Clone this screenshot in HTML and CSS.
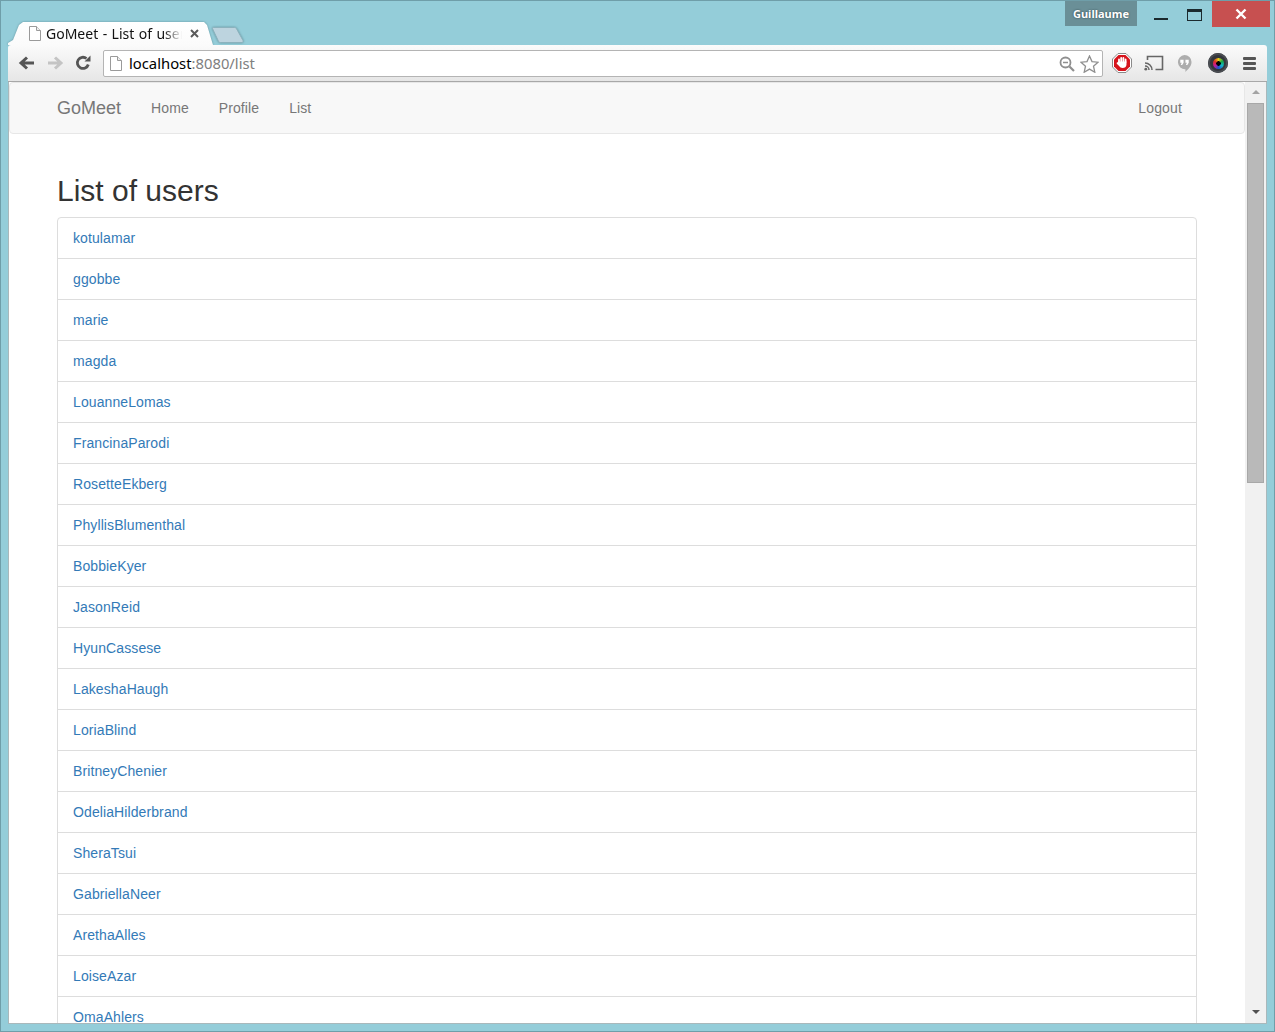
FILE: index.html
```html
<!DOCTYPE html>
<html lang="en">
<head>
<meta charset="utf-8">
<title>GoMeet - List of users</title>
<link rel="stylesheet" href="styles.css">
</head>
<body>
<div class="window">
  <div class="titlebar">
    <div class="tabstrip">
      <div class="tab">
        <svg class="favicon" width="12" height="15" viewBox="0 0 12 15"><path d="M.5.5h7l4 4v10H.5z" fill="#fff" stroke="#9a9a9a"/><path d="M7.5.5v4h4" fill="#eee" stroke="#9a9a9a"/></svg>
        <span class="tab-title">GoMeet - List of user</span>
        <svg class="tab-close" width="9" height="9" viewBox="0 0 9 9"><path d="M1 1l7 7M8 1L1 8" stroke="#5a5a5a" stroke-width="2"/></svg>
      </div>
      <svg class="newtab" width="32" height="16" viewBox="0 0 32 16"><path d="M1.500.5h21a2 2 0 0 1 2 1.200l6.500 11.800c.3 1-.2 2-1 2H8.500a2 2 0 0 1-2-1.200L.6 1.800C.3 1 .7.500 1.500.500z" fill="#bdd4df" stroke="#8cb2bd"/></svg>
    </div>
    <div class="wincontrols">
      <div class="profile">Guillaume</div>
      <div class="winbtn"><span class="win-min"></span></div>
      <div class="winbtn"><span class="win-max"></span></div>
      <div class="winclose"><svg width="12" height="12" viewBox="0 0 12 12"><path d="M1.500 1.500l9 9M10.500 1.500l-9 9" stroke="#fff" stroke-width="2.400"/></svg></div>
    </div>
  </div>
  <div class="toolbar">
    <svg class="tb-icon tb-back" width="18" height="16" viewBox="0 0 18 16"><path d="M16 8H4M9 2.500L3 8l6 5.500" fill="none" stroke="#555" stroke-width="3"/></svg>
    <svg class="tb-icon" width="18" height="16" viewBox="0 0 18 16"><path d="M2 8h12M9 2.500L15 8l-6 5.500" fill="none" stroke="#c4c4c4" stroke-width="3"/></svg>
    <svg class="tb-icon tb-reload" width="16" height="16" viewBox="0 0 16 16"><path d="M13.300 9.500A5.600 5.600 0 1 1 11.500 3.500" fill="none" stroke="#555" stroke-width="2.800"/><path d="M9.500 6.500H15.500V.5z" fill="#555"/></svg>
    <div class="omnibox">
      <svg class="favicon" width="12" height="15" viewBox="0 0 12 15"><path d="M.5.5h7l4 4v10H.5z" fill="#fff" stroke="#9a9a9a"/><path d="M7.500.5v4h4" fill="#eee" stroke="#9a9a9a"/></svg>
      <span class="url"><span class="url-host">localhost</span>:8080/list</span>
      <svg class="omni-zoom" width="16" height="16" viewBox="0 0 16 16"><circle cx="6.500" cy="6.500" r="5" fill="none" stroke="#8f8f8f" stroke-width="1.800"/><path d="M4 6.500h5" stroke="#8f8f8f" stroke-width="1.500"/><path d="M10.500 10.500L15 15" stroke="#8f8f8f" stroke-width="2.200"/></svg>
      <svg class="omni-star" width="19" height="18" viewBox="0 0 19 18"><path d="M9.500 1l2.500 5.600 6 .6-4.500 4 1.300 6-5.300-3.100-5.300 3.100 1.300-6L1 7.200l6-.6z" fill="#fff" stroke="#8f8f8f" stroke-width="1.300"/></svg>
    </div>
    <div class="extensions">
      <svg width="20" height="20" viewBox="0 0 20 20"><path d="M6 .5h8L19.500 6v8L14 19.500H6L.5 14V6z" fill="#fff" stroke="#8a8a8a"/><path d="M6.500 2h7L18 6.500v7L13.500 18h-7L2 13.500v-7z" fill="#d6141c"/><path d="M7 9V6.500M9.200 9V5M11.400 9V5M13.600 9V6.500" stroke="#fff" stroke-width="1.800" stroke-linecap="round"/><path d="M6.100 8.500h8.400v3c0 2.400-1.800 3.500-3.900 3.500-1.600 0-2.700-.7-3.500-2L4.800 10.700c-.5-.9.500-1.700 1.300-1.200z" fill="#fff"/></svg>
      <svg width="20" height="16" viewBox="0 0 20 16"><path d="M3.500 5V1.500h15v13h-7" fill="none" stroke="#666" stroke-width="1.600"/><path d="M1 8a7 7 0 0 1 7 7M1 11a4 4 0 0 1 4 4" fill="none" stroke="#666" stroke-width="1.500"/><circle cx="1.800" cy="14.200" r="1.400" fill="#666"/></svg>
      <svg class="ext-hangouts" width="15" height="19" viewBox="0 0 16 19"><path d="M8 .5a7.500 7.500 0 0 1 7.500 7.500c0 4.500-3.500 7.800-6.500 10.500v-3A7.500 7.500 0 0 1 8 .5z" fill="#adadad"/><path d="M3.500 5.500h3.500v3.200L5.500 11H4l1-2.300H3.500zM9 5.500h3.500v3.200L11 11H9.500l1-2.300H9z" fill="#fff"/></svg>
      <div class="lens"><span class="lens-color"></span></div>
      <div class="menu-icon"><span></span><span></span><span></span></div>
    </div>
  </div>
  <div class="viewport">
    <div class="page">
      <nav class="navbar">
        <a class="brand">GoMeet</a>
        <a class="nav-link">Home</a>
        <a class="nav-link">Profile</a>
        <a class="nav-link">List</a>
        <a class="nav-link nav-right">Logout</a>
      </nav>
      <main class="container">
        <h2 class="heading">List of users</h2>
        <div class="list-group">
          <a class="list-item">kotulamar</a>
          <a class="list-item">ggobbe</a>
          <a class="list-item">marie</a>
          <a class="list-item">magda</a>
          <a class="list-item">LouanneLomas</a>
          <a class="list-item">FrancinaParodi</a>
          <a class="list-item">RosetteEkberg</a>
          <a class="list-item">PhyllisBlumenthal</a>
          <a class="list-item">BobbieKyer</a>
          <a class="list-item">JasonReid</a>
          <a class="list-item">HyunCassese</a>
          <a class="list-item">LakeshaHaugh</a>
          <a class="list-item">LoriaBlind</a>
          <a class="list-item">BritneyChenier</a>
          <a class="list-item">OdeliaHilderbrand</a>
          <a class="list-item">SheraTsui</a>
          <a class="list-item">GabriellaNeer</a>
          <a class="list-item">ArethaAlles</a>
          <a class="list-item">LoiseAzar</a>
          <a class="list-item">OmaAhlers</a>
        </div>
      </main>
    </div>
    <div class="scrollbar">
      <span class="arrow-up"></span>
      <div class="track"><div class="thumb"></div></div>
      <span class="arrow-down"></span>
    </div>
  </div>
</div>
</body>
</html>
```
FILE: styles.css
```css
* { box-sizing: border-box; }
html, body { margin: 0; height: 100%; overflow: hidden; }
body { font-family: "Liberation Sans", Arial, sans-serif; background: #94cdd9; }
.window {
  width: 1275px; height: 1032px; display: flex; flex-direction: column;
  background: #94cdd9; border: 1px solid #6f9ea9; padding: 0 7px 7px;
}
.titlebar { height: 44px; flex: none; display: flex; justify-content: space-between; align-items: flex-start; }
.tabstrip { display: flex; align-items: flex-end; height: 44px; filter: drop-shadow(0 0 1px rgba(60, 100, 110, .55)); }
.tab {
  width: 205px; height: 23px; background: linear-gradient(#fff, #fbfbfb);
  display: flex; align-items: center; padding: 0 0 1px 21px; gap: 5px; margin-right: -1px;
  clip-path: polygon(0 100%, 0 21px, 5px 18px, 11px 3px, 15px 0, 196px 0, 199px 3px, 205px 100%);
}
.favicon { flex: none; }
.tab-title {
  font-family: "Noto Sans", sans-serif; font-size: 14px; word-spacing: .8px; color: #111; width: 136px; white-space: nowrap;
  overflow: hidden; -webkit-mask-image: linear-gradient(90deg, #000 118px, transparent 136px); mask-image: linear-gradient(90deg, #000 118px, transparent 136px);
}
.tab-close { flex: none; margin-left: 3px; }
.newtab { margin-bottom: 2px; }
.wincontrols { display: flex; align-items: flex-start; margin-right: -3px; }
.profile {
  width: 72px; height: 25px; margin-right: 6px; background: #6a8f97; color: #fff;
  font: bold 11px/26px "Noto Sans", sans-serif; text-align: center; text-shadow: 0 0 2px #2c3f44;
}
.winbtn { width: 34px; height: 25px; display: flex; align-items: center; justify-content: center; }
.win-min { width: 14px; height: 2px; background: #1b2a2e; margin: 11px 0 0 1px; }
.win-max { width: 15px; height: 12px; border: 1px solid #1b2a2e; border-top-width: 3px; margin-top: 2px; }
.winclose { width: 58px; height: 26px; background: #c75050; display: flex; align-items: center; justify-content: center; margin-left: 1px; }
.toolbar {
  position: relative;
  height: 37px; flex: none; display: flex; align-items: center; padding: 0 9px 0 10px;
  background: linear-gradient(#fbfbfb, #e6e6e6); border-bottom: 1px solid #a8a8a8; border-radius: 3px 3px 0 0;
}
.tb-icon { flex: none; margin-right: 11px; }
.tb-back { margin-right: 10px; }
.tb-reload { margin-right: 11px; }
.omnibox {
  width: 1000px; height: 27px; flex: none; margin-left: 1px; margin-top: 1px; background: #fff; border: 1px solid #b4b4b4; border-radius: 2px;
  display: flex; align-items: center; padding: 0 3px 0 6px; gap: 7px;
}
.url { font-family: "Noto Sans", sans-serif; font-size: 14.800px; color: #808080; flex: 1; padding-bottom: 1px; }
.url-host { color: #000; }
.omni-zoom { margin-right: -2px; }
.extensions { display: flex; align-items: center; gap: 12px; margin-left: 9px; }
.ext-hangouts { margin-left: 1px; }
.lens {
  width: 20px; height: 20px; margin-left: 4px; border-radius: 50%; background: #33363c;
  display: flex; align-items: center; justify-content: center; box-shadow: inset 0 0 0 2px #4a4d52;
}
.lens-color {
  width: 11px; height: 11px; border-radius: 50%;
  background: radial-gradient(circle, #000 0 2px, transparent 2.500px), conic-gradient(#e8d21a, #11a84a, #12b5c8, #2050d0, #c8189a, #e03020, #e8d21a);
}
.menu-icon { display: flex; flex-direction: column; gap: 2px; width: 13px; margin-left: 3px; }
.menu-icon span { height: 3px; background: #555; border-radius: 1px; }
.viewport {
  flex: 1; min-height: 0; display: flex; background: #fff; overflow: hidden;
  border: 1px solid #a9b8bb; border-top: 0;
}
.page { flex: 1; min-width: 0; overflow: hidden; }
.navbar {
  height: 52px; background: #f8f8f8; border: 1px solid #e7e7e7; border-radius: 4px;
  display: flex; align-items: center; padding: 0 48px 0 47px; font-size: 14px;
}
.brand { font-size: 18px; color: #777; margin-right: 30px; }
.nav-link { color: #777; margin-right: 30px; letter-spacing: .1px; }
.nav-right { margin-left: auto; margin-right: 14px; letter-spacing: .15px; }
.container { padding: 0 48px; }
.heading { font-size: 30px; font-weight: 500; line-height: 33px; color: #333; margin: 40px 0 10px; }
.list-group { display: flex; flex-direction: column; }
.list-item {
  display: block; height: 42px; margin-bottom: -1px; padding: 10px 15px; font-size: 14px; line-height: 20px;
  letter-spacing: .1px; color: #337ab7; background: #fff; border: 1px solid #ddd;
}
.list-item:first-child { border-radius: 4px 4px 0 0; }
.scrollbar { width: 21px; flex: none; background: #f1f1f1; display: flex; flex-direction: column; align-items: center; }
.arrow-up { flex: none; margin-top: 8px; width: 0; height: 0; border: 4px solid transparent; border-top: 0; border-bottom: 4px solid #a3a3a3; }
.track { flex: 1; width: 100%; padding: 9px 2px 0; }
.thumb { height: 380px; background: #b9b9b9; border: 1px solid #a8a8a8; }
.arrow-down { flex: none; margin-bottom: 9px; width: 0; height: 0; border: 4px solid transparent; border-bottom: 0; border-top: 4px solid #505050; }
```
